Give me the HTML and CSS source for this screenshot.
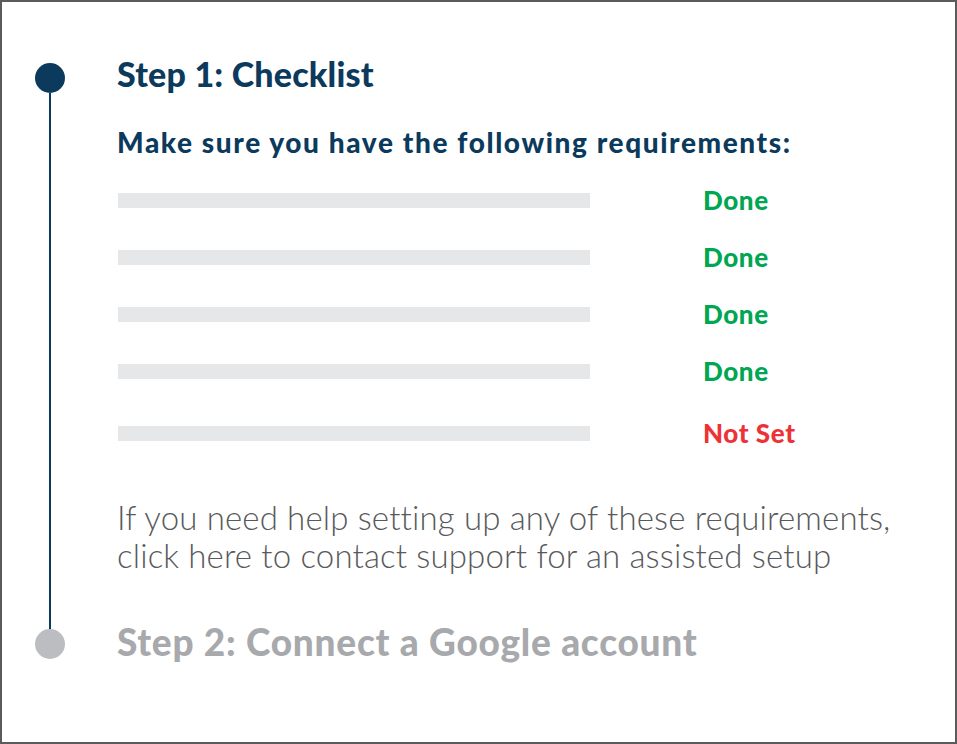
FILE: index.html
```html
<!DOCTYPE html>
<html lang="en">
<head>
<meta charset="utf-8">
<title>Setup steps</title>
<link rel="stylesheet" href="styles.css">
</head>
<body>
<div class="frame">
  <section class="step step-active">
    <div class="marker">
      <span class="dot dot-active"></span>
      <span class="line"></span>
    </div>
    <div class="content">
      <h1 class="step-title">Step 1: Checklist</h1>
      <h2 class="subtitle">Make sure you have the following requirements:</h2>
      <ul class="checklist">
        <li class="req"><span class="bar"></span><span class="status done">Done</span></li>
        <li class="req"><span class="bar"></span><span class="status done">Done</span></li>
        <li class="req"><span class="bar"></span><span class="status done">Done</span></li>
        <li class="req"><span class="bar"></span><span class="status done">Done</span></li>
        <li class="req req-last"><span class="bar"></span><span class="status notset">Not Set</span></li>
      </ul>
      <p class="help">If you need help setting up any of these requirements, click here to contact support for an assisted setup</p>
    </div>
  </section>
  <section class="step step-next">
    <div class="marker">
      <span class="dot dot-next"></span>
    </div>
    <div class="content">
      <h1 class="step-title step-title-next">Step 2: Connect a Google account</h1>
    </div>
  </section>
</div>
</body>
</html>
```
FILE: styles.css
```css
html, body {
  margin: 0;
  padding: 0;
  background: #ffffff;
}

.frame {
  width: 957px;
  height: 744px;
  box-sizing: border-box;
  border: 2px solid #5b5b5b;
  padding: 61px 0 0 33px;
  font-family: Lato, "Open Sans", sans-serif;
}

.step {
  display: grid;
  grid-template-columns: 30px 1fr;
  column-gap: 52px;
}

.marker {
  display: flex;
  flex-direction: column;
  align-items: center;
}

.dot {
  width: 30px;
  height: 30px;
  border-radius: 50%;
  flex: none;
}

.dot-active { background: #0b3a5c; }
.dot-next { background: #bcbdc0; }

.line {
  width: 2px;
  flex: 1;
  background: #0b3a5c;
}

.content {
  min-width: 0;
}

.step-active .content {
  padding-bottom: 55px;
}

.step-title {
  margin: -4px 0 0;
  font-size: 34px;
  line-height: 30px;
  font-weight: 900;
  letter-spacing: 0.2px;
  color: #0b3a5c;
}

.step-title-next {
  margin-top: -2px;
  font-size: 37px;
  letter-spacing: 0.75px;
  color: #a7a9ac;
}

.subtitle {
  margin: 38px 0 0;
  font-size: 28px;
  line-height: 30px;
  font-weight: 900;
  letter-spacing: 1.6px;
  color: #0b3a5c;
}

.checklist {
  list-style: none;
  margin: 36px 0 0;
  padding: 0;
  display: flex;
  flex-direction: column;
  gap: 42px;
}

.req {
  display: flex;
  align-items: center;
  height: 15px;
}

.req-last {
  margin-top: 5px;
}

.bar {
  width: 472px;
  height: 15px;
  background: #e6e7e8;
  margin-left: 1px;
}

.status {
  margin-left: 113px;
  font-size: 26px;
  font-weight: 900;
  line-height: 15px;
  letter-spacing: 0.6px;
}

.done { color: #00a651; }
.notset { color: #ed3237; }

.help {
  max-width: 800px;
  margin: 57px 0 0;
  font-size: 33px;
  line-height: 38px;
  font-weight: 300;
  letter-spacing: 0.15px;
  color: #58595b;
}
```
